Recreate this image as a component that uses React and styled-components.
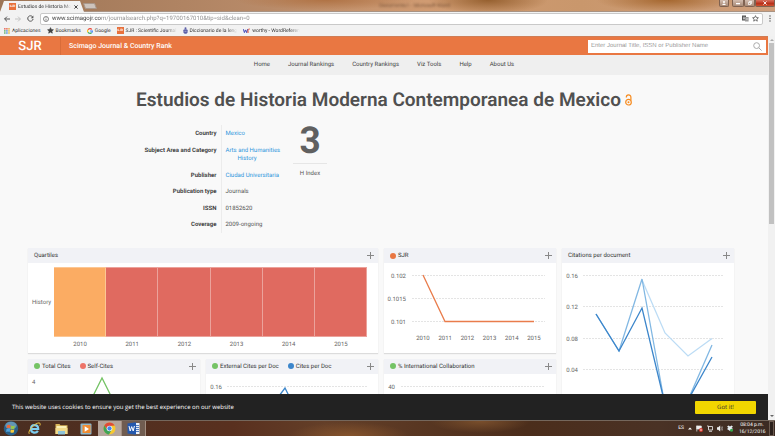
import React from "react";
import styled, { createGlobalStyle } from "styled-components";

const GlobalStyle = createGlobalStyle`
  *, *::before, *::after { box-sizing: border-box; }
  body { margin: 0; overflow: hidden; font-family: Roboto, sans-serif; font-size: 6px; color: #555; text-rendering: geometricPrecision; }
  button, input { font: inherit; text-rendering: inherit; border: 0; padding: 0; margin: 0; background: none; color: inherit; }
  a { color: inherit; text-decoration: none; }
  svg { display: block; flex: none; }
`;

const Desktop = styled.div`
  height: 100vh;
  display: flex;
  flex-direction: column;
`;

/* ---------- Browser frame ---------- */

const TitleBar = styled.header`
  flex: none;
  height: 12px;
  display: flex;
  align-items: flex-end;
  background:
    radial-gradient(ellipse 60px 14px at 63% 0, #96602f 0, transparent 100%),
    radial-gradient(ellipse 70px 12px at 86% 0, #a5672f 0, transparent 100%),
    radial-gradient(ellipse 90px 10px at 42% 0, #b07345 0, transparent 100%),
    linear-gradient(90deg, #9d7556, #b98b69 35%, #d09b72 55%, #c9976c 75%, #cf9f7c);
  box-shadow: inset 0 -1px #a99383;
`;

const Tab = styled.div`
  width: 84px;
  height: 11px;
  padding: 0 5px 0 9px;
  display: flex;
  align-items: center;
  gap: 2px;
  background: #f2f2f2;
  clip-path: polygon(4px 0, 80px 0, 100% 100%, 0 100%);
  font: 5px/10px Roboto, sans-serif;
  color: #333;
  white-space: nowrap;
`;

const TabTitle = styled.span`
  flex: 1;
  mask-image: linear-gradient(90deg, #000 85%, transparent);
`;

const TabClose = styled.button`
  width: 7px;
  height: 7px;
  display: grid;
  place-items: center;
`;

const NewTab = styled.button`
  width: 12px;
  height: 6px;
  align-self: center;
  background: #cdc3bc;
  transform: skewX(20deg);
  border-radius: 1px;
  border: 1px solid #a9978a;
`;

const TitleGhost = styled.span`
  flex: 1;
  padding-left: 14px;
  text-align: center;
  align-self: center;
  font: 5px/8px "Open Sans", sans-serif;
  color: #6b4a33;
  filter: blur(1px);
`;

const WindowControls = styled.div`
  display: flex;
  align-self: flex-start;
`;

const WindowButton = styled.button`
  width: ${(p) => p.$width}px;
  height: 7px;
  margin-right: ${(p) => (p.$apart ? 3 : 0)}px;
  display: grid;
  place-items: center;
  color: #fff;
  border: 1px solid #7f6251;
  border-top: 0;
  border-radius: 0 0 2px 2px;
  background: ${(p) => (p.$danger ? "linear-gradient(#d9705e, #b8301a 60%, #d0522f)" : "linear-gradient(#d3bcae, #a98b78)")};
`;

const Toolbar = styled.div`
  flex: none;
  height: 13px;
  padding: 0 4px;
  display: flex;
  align-items: center;
  gap: 6px;
  background: #f2f2f2;
`;

const ToolButton = styled.button`
  width: 5px;
  height: 8px;
  display: grid;
  place-items: center;
  color: ${(p) => (p.$dim ? "#c4c4c4" : "#555")};
`;

const ReloadButton = styled(ToolButton)`
  width: 8px;
`;

const AddressBar = styled.div`
  flex: 1;
  height: 12px;
  padding: 0 3px 0 2px;
  display: flex;
  align-items: center;
  gap: 3px;
  color: #555;
  background: #fff;
  border: 1px solid #c9c9c9;
  border-radius: 2px;
`;

const AddressInput = styled.input`
  flex: 1;
  min-width: 0;
  height: 9px;
  outline: 0;
  font: 6px/9px Roboto, sans-serif;
  color: transparent;
  background: linear-gradient(90deg, #333 49px, #888 49px);
  background-clip: text;
  -webkit-background-clip: text;
`;

const Bookmarks = styled.nav`
  flex: none;
  height: 11px;
  padding: 0 4px;
  display: flex;
  align-items: center;
  gap: 6px;
  background: #f2f2f2;
  font: 5px/10px Roboto, sans-serif;
  color: #333;
`;

const Bookmark = styled.a`
  display: flex;
  align-items: center;
  gap: 2px;
  white-space: nowrap;
  mask-image: ${(p) => (p.$fade ? "linear-gradient(90deg, #000 82%, transparent)" : "none")};
`;

const SjrTile = styled.span`
  flex: none;
  width: 7px;
  height: 7px;
  font: 700 3px/7px Roboto, sans-serif;
  text-align: center;
  color: #fff;
  background: #e8713c;
`;

/* ---------- Site ---------- */

const Viewport = styled.div`
  flex: 1;
  min-height: 0;
  display: flex;
  position: relative;
`;

const Page = styled.div`
  flex: 1;
  min-width: 0;
  overflow: hidden;
  background: #f9f9f9;
`;

const ScrollTrack = styled.div`
  flex: none;
  width: 7px;
  display: flex;
  flex-direction: column;
  align-items: center;
  padding: 3px 0;
  gap: 2px;
  background: #f1f1f1;
`;

const ScrollThumb = styled.div`
  width: 5px;
  height: 48%;
  background: #c1c1c1;
`;

const ScrollArrow = styled.div`
  border: 2px solid transparent;
  border-top: ${(p) => (p.$down ? "2px solid #666" : "0")};
  border-bottom: ${(p) => (p.$down ? "0" : "2px solid #aaa")};
  margin-top: ${(p) => (p.$down ? "auto" : "0")};
`;

const SiteHeader = styled.div`
  height: 19px;
  padding-right: 2px;
  display: flex;
  align-items: center;
  color: #fff;
  background: #e97742;
  border-top: 1px solid #cf7d55;
`;

const Logo = styled.a`
  width: 61px;
  height: 18px;
  font-size: 13px;
  font-weight: 500;
  line-height: 19px;
  text-align: center;
  border-right: 1px solid #d96c39;
`;

const SiteName = styled.span`
  flex: 1;
  padding-left: 8px;
  font-size: 7px;
  font-weight: 500;
  line-height: 18px;
`;

const SearchBox = styled.form`
  width: 178px;
  height: 13px;
  padding: 0 4px 0 3px;
  display: flex;
  align-items: center;
  color: #aaa;
  background: #fff;
`;

const SearchInput = styled.input`
  flex: 1;
  min-width: 0;
  height: 11px;
  outline: 0;
  font: 6px/11px "Liberation Sans", sans-serif;
  &::placeholder { color: #999; opacity: 1; }
`;

const IconButton = styled.button`
  display: grid;
  place-items: center;
  color: #8c8c8c;
`;

const SiteNav = styled.nav`
  height: 20px;
  display: flex;
  align-items: center;
  justify-content: center;
  gap: 18px;
  line-height: 20px;
  color: #444;
  background: #efefef;
`;

const Title = styled.h1`
  margin: 12px 0 0;
  display: flex;
  justify-content: center;
  align-items: center;
  gap: 4px;
  font-size: 19px;
  font-weight: 600;
  line-height: 26px;
  color: #505050;
  white-space: nowrap;
`;

const Summary = styled.section`
  padding: 12px 0 0 28px;
  display: flex;
  gap: 9px;
`;

const Facts = styled.table`
  width: 256px;
  height: 108px;
  table-layout: fixed;
  border-collapse: collapse;
  line-height: 8px;
`;

const FactName = styled.th`
  width: 193px;
  padding: 5px 4px 3px 0;
  text-align: right;
  vertical-align: top;
  font-weight: 700;
  color: #444;
  border-right: 1px solid #ececec;
`;

const FactValue = styled.td`
  padding: 5px 0 3px 4px;
  vertical-align: top;
  color: ${(p) => (p.$link ? "#2f96dc" : "#555")};
  white-space: nowrap;
`;

const SubItem = styled.a`
  display: block;
  padding-left: 12px;
`;

const HIndex = styled.div`
  width: 34px;
  text-align: center;
  color: #555;
`;

const HValue = styled.div`
  height: 39px;
  font-size: 37px;
  font-weight: 700;
  line-height: 33px;
  color: #606060;
  border-bottom: 1px solid #e6e6e6;
`;

const HLabel = styled.div`
  line-height: 20px;
`;

const Panels = styled.section`
  margin: 15px 34px 0 28px;
  display: grid;
  grid-template-columns: repeat(4, 1fr);
  gap: 6px;
`;

const Panel = styled.article`
  grid-column: span ${(p) => p.$cols || 1};
  grid-row: span ${(p) => p.$rows || 1};
  background: #fff;
  box-shadow: 0 1px 1px #dcdcdc;
`;

const PanelHeader = styled.header`
  height: 15px;
  padding: 0 4px 0 6px;
  display: flex;
  align-items: center;
  gap: 9px;
  background: #f1f2f6;
  color: #333;
`;

const PanelTitle = styled.h2`
  margin: 0;
  display: flex;
  align-items: center;
  gap: 2px;
  font-size: 6px;
  font-weight: 400;
  line-height: 15px;
  white-space: nowrap;
`;

const Dot = styled.span`
  width: 6px;
  height: 6px;
  border-radius: 50%;
  background: ${(p) => p.$color};
`;

const ExpandButton = styled(IconButton)`
  margin-left: auto;
`;

const Quartiles = styled.div`
  height: 89px;
  padding: 4px 11px 0 4px;
  display: grid;
  grid-template-columns: 22px repeat(6, 1fr);
  grid-template-rows: 70px 15px;
  align-items: center;
  justify-items: center;
  color: #666;
`;

const QuartileLabel = styled.span`
  justify-self: start;
`;

const QuartileCell = styled.div`
  width: 100%;
  height: 100%;
  background: ${(p) => (p.$quartile === 2 ? "#fbac63" : "#e06a60")};
  border: 1px solid ${(p) => (p.$quartile === 2 ? "#fcc794" : "#eba29b")};
  border-left-width: 0;
`;

const Chart = styled.svg`
  width: 100%;
  height: auto;
  font-size: 6px;
  fill: none;
  text { fill: #666; }
`;

const CookieBar = styled.div`
  position: absolute;
  left: 0;
  right: 7px;
  bottom: 0;
  height: 26px;
  padding: 0 12px;
  display: flex;
  align-items: center;
  justify-content: space-between;
  font: 400 6px/12px "Open Sans", sans-serif;
  color: #fff;
  background: #222;
`;

const AcceptButton = styled.button`
  width: 61px;
  height: 13px;
  font-size: 6px;
  color: #333;
  background: #f1d600;
  border-radius: 1px;
`;

/* ---------- Taskbar ---------- */

const Taskbar = styled.footer`
  flex: none;
  height: 16px;
  padding: 0 1px 0 2px;
  display: flex;
  align-items: center;
  color: #fff;
  background:
    radial-gradient(ellipse 50px 12px at 62% 0, #7a4f2c, transparent),
    radial-gradient(ellipse 60px 14px at 45% 100%, #85532c, transparent),
    linear-gradient(90deg, #4a2e21, #59301f 30%, #643f28 42%, #4b2d1b 68%, #4a3225 85%, #3b2a22);
  border-top: 1px solid #75675c;
`;

const TaskButton = styled.button`
  width: ${(p) => p.$width || 24}px;
  height: 15px;
  display: grid;
  place-items: center;
  background: ${(p) => (p.$active ? "#b5a59b" : p.$open ? "#705c50" : "none")};
  border-right: 1px solid ${(p) => (p.$open ? "#a18d80" : "transparent")};
`;

const Tray = styled.div`
  margin-left: auto;
  display: flex;
  align-items: center;
  gap: 4px;
  font: 5px/7px Roboto, sans-serif;
`;

const Clock = styled.time`
  margin-left: 2px;
  width: 26px;
  text-align: center;
  white-space: nowrap;
`;

const ShowDesktop = styled.button`
  width: 5px;
  height: 15px;
  background: #2c211c;
  border: 1px solid #6d5c51;
`;

/* ---------- Icons ---------- */

const Plus = () => (
  <svg width="7" height="7" viewBox="0 0 7 7" stroke="#888" strokeWidth="1">
    <path d="M3.5 0v7M0 3.5h7" />
  </svg>
);

const Cross = ({ size = 4 }) => (
  <svg width={size} height={size} viewBox="0 0 4 4" stroke="currentColor" strokeWidth="0.9">
    <path d="M.4.4l3.2 3.2M3.6.4L.4 3.6" />
  </svg>
);

const Arrow = ({ flip }) => (
  <svg width="6" height="6" viewBox="0 0 6 6" fill="none" stroke="currentColor" strokeWidth="1">
    <path d={flip ? "M0 3h5.4M3 .6L5.4 3 3 5.4" : "M6 3H.6M3 .6L.6 3 3 5.4"} />
  </svg>
);

const Reload = () => (
  <svg width="7" height="7" viewBox="0 0 7 7" fill="none" stroke="currentColor" strokeWidth="1">
    <path d="M5.7 2A2.7 2.7 0 1 0 6.1 4" />
    <path d="M6.4.4v2.8H3.8z" fill="currentColor" stroke="none" />
  </svg>
);

const Info = () => (
  <svg width="6" height="6" viewBox="0 0 6 6" fill="none" stroke="currentColor" strokeWidth=".7">
    <circle cx="3" cy="3" r="2.5" />
    <path d="M3 2.6v2M3 1.3v.7" />
  </svg>
);

const Translate = () => (
  <svg width="7" height="7" viewBox="0 0 7 7">
    <rect x="0" y=".5" width="4" height="5" fill="#555" />
    <rect x="3" y="2" width="3.6" height="4.5" fill="#999" />
    <path d="M1 3.2h2M2 1.6v3M4 4h2" stroke="#fff" strokeWidth=".6" />
  </svg>
);

const Star = ({ filled }) => (
  <svg width="7" height="7" viewBox="0 0 14 14" fill={filled ? "#444" : "none"} stroke="#444" strokeWidth="1.4">
    <path d="M7 1.3l1.7 3.8 4.1.4-3.1 2.7.9 4.1L7 10.2l-3.6 2.1.9-4.1L1.2 5.5l4.1-.4z" />
  </svg>
);

const Dots = () => (
  <svg width="2" height="7" viewBox="0 0 2 7" fill="#666">
    <circle cx="1" cy="1" r=".8" />
    <circle cx="1" cy="3.5" r=".8" />
    <circle cx="1" cy="6" r=".8" />
  </svg>
);

const Apps = () => (
  <svg width="6" height="6" viewBox="0 0 6 6">
    {["#e8776a", "#e8776a", "#eab55a", "#74b77b", "#6a9be0", "#e8c04d", "#74b77b", "#6a9be0", "#e8c04d"].map((c, i) => (
      <rect key={i} x={(i % 3) * 2.1} y={Math.floor(i / 3) * 2.1} width="1.6" height="1.6" fill={c} />
    ))}
  </svg>
);

const Google = () => (
  <svg width="6" height="6" viewBox="0 0 12 12" fill="none" strokeWidth="2.2">
    <path d="M9.8 3A4.8 4.8 0 0 0 2 3.5" stroke="#ea4335" />
    <path d="M2 3.5a4.8 4.8 0 0 0 0 5" stroke="#fbbc05" />
    <path d="M2 8.5a4.8 4.8 0 0 0 7.2 1" stroke="#34a853" />
    <path d="M9.2 9.5A4.6 4.6 0 0 0 10.8 6H6" stroke="#4285f4" />
  </svg>
);

const Crest = () => (
  <svg width="5" height="7" viewBox="0 0 5 7" fill="#5b5fa8">
    <circle cx="2.5" cy="1.2" r="1" />
    <path d="M.4 3.2C.4 2 4.6 2 4.6 3.2v2C4.6 6 3.6 6.8 2.5 6.8S.4 6 .4 5.2z" />
    <path d="M1.5 4.3h2" stroke="#c3c4e2" strokeWidth=".7" />
  </svg>
);

const WordReference = () => (
  <svg width="7" height="6" viewBox="0 0 7 6" fill="none">
    <path d="M.4 1.2l1 3.4 1.1-2.7 1.1 2.7 1-3.4" stroke="#4048b8" strokeWidth="1" />
    <path d="M5 5V2.2C5.3 1 6.2.8 6.8 1.2" stroke="#d8452f" strokeWidth="1" />
  </svg>
);

const Search = () => (
  <svg width="9" height="9" viewBox="0 0 9 9" fill="none" stroke="#aaa" strokeWidth="1">
    <circle cx="3.6" cy="3.6" r="2.9" />
    <path d="M5.7 5.7l2.9 2.9" />
  </svg>
);

const OpenAccess = () => (
  <svg width="7" height="12" viewBox="0 0 7 12" fill="none" stroke="#f68b1f" strokeWidth="1.2">
    <circle cx="3.5" cy="8.2" r="2.8" />
    <path d="M1.3 3.5C1.3 0 5.9 0 5.9 3.3v3.2" />
    <circle cx="3.5" cy="8.2" r="1" fill="#f68b1f" stroke="none" />
  </svg>
);

const StartOrb = () => (
  <svg width="16" height="15" viewBox="0 0 16 15">
    <circle cx="8" cy="7.5" r="7.2" fill="#2b5f86" />
    <ellipse cx="8" cy="4.5" rx="5.7" ry="3.8" fill="#7fb0cc" opacity=".65" />
    <path d="M4 4.3q1.8-1 3.6 0l-.4 3q-1.7-1-3.6 0z" fill="#e8683c" />
    <path d="M8.2 4.5q1.8 1 3.6 0l-.4 3q-1.7 1-3.6 0z" fill="#9bc648" />
    <path d="M3.5 8q1.8-1 3.6 0l-.4 3q-1.7-1-3.6 0z" fill="#4fa3dc" />
    <path d="M7.7 8.2q1.8 1 3.6 0l-.4 3q-1.7 1-3.6 0z" fill="#f5ca3c" />
  </svg>
);

const Explorer = () => (
  <svg width="13" height="13" viewBox="0 0 13 13" fill="none">
    <path d="M3 7h7.2C10.2 1.9 3 1.9 3 7c0 4.3 5.2 4.6 6.9 1.9" stroke="#7ccdf0" strokeWidth="2.2" />
    <path d="M1.2 11.8C-.6 9 6.5 1 11 .9c1.6.1 1.4 1.6.8 2.7" stroke="#e9c544" strokeWidth="1" />
  </svg>
);

const Folder = () => (
  <svg width="13" height="12" viewBox="0 0 13 12">
    <path d="M.5 1h4l1 1.2h7V11H.5z" fill="#d9b75b" />
    <path d="M1.5 3h10v6h-10z" fill="#f9efb8" />
    <path d="M.5 5h12v6H.5z" fill="#f0d98a" />
    <path d="M3 8h7v3.5H3z" fill="#8ec3d8" />
  </svg>
);

const MediaPlayer = () => (
  <svg width="12" height="12" viewBox="0 0 12 12">
    <rect x=".5" y=".5" width="11" height="11" rx="1" fill="#8fb6c8" />
    <rect x="2.5" y="2" width="8" height="8" fill="#ef8b31" />
    <path d="M4.7 3.3v5.4L9 6z" fill="#fff" />
  </svg>
);

const Chrome = () => (
  <svg width="13" height="13" viewBox="0 0 26 26">
    <circle cx="13" cy="13" r="12" fill="#f7c92f" />
    <path d="M2.6 7A12 12 0 0 1 23.4 7L13 8 8.5 15.5z" fill="#dd4b3a" />
    <path d="M2.6 7A12 12 0 0 0 12 25l5.5-9.5L8 15z" fill="#3fa357" />
    <circle cx="13" cy="13" r="5.6" fill="#fff" />
    <circle cx="13" cy="13" r="4.3" fill="#4686e8" />
  </svg>
);

const WordApp = () => (
  <svg width="13" height="13" viewBox="0 0 13 13">
    <rect x="4" y="1" width="8.5" height="11" fill="#e9f0fa" />
    <path d="M9 3.5h3M9 5.5h3M9 7.5h3M9 9.5h3" stroke="#2c5fb3" strokeWidth=".8" />
    <path d="M.5 1.5L9 .3v12.4L.5 11.5z" fill="#2458ad" />
    <path d="M2 4l1.2 5L4.7 4.6 6.2 9 7.4 4" stroke="#fff" strokeWidth="1" fill="none" />
  </svg>
);

const TrayFlag = () => (
  <svg width="7" height="7" viewBox="0 0 7 7">
    <path d="M.8.5V6.5M.8 1h4.5v3H.8z" fill="#eee" stroke="#eee" strokeWidth=".7" />
    <circle cx="5" cy="5" r="2" fill="#d93a2f" />
    <path d="M4.2 4.2l1.6 1.6M5.8 4.2L4.2 5.8" stroke="#fff" strokeWidth=".5" />
  </svg>
);

const TrayNetwork = () => (
  <svg width="6" height="7" viewBox="0 0 6 7" fill="none" stroke="#ddd" strokeWidth=".9">
    <path d="M1.5 1.5h4V5h-4zM0 1h1.5v2.5M2 6.3h3" />
  </svg>
);

const TrayVolume = () => (
  <svg width="6" height="7" viewBox="0 0 6 7" fill="#eee">
    <path d="M0 2.3h1.2L3.2.6v5.8L1.2 4.7H0z" />
    <path d="M4 2q1 1.5 0 3M5 1.2q1.5 2.3 0 4.6" fill="none" stroke="#bbb" strokeWidth=".6" />
  </svg>
);

const TrayDropbox = () => (
  <svg width="6" height="7" viewBox="0 0 6 7">
    <path d="M1.5.5L3 1.5 4.5.5 6 1.7 4.6 2.8 6 3.9 3 6 0 3.9l1.4-1.1L0 1.7z" fill="#e6edf2" />
    <circle cx="4.5" cy="5.2" r="1.5" fill="#35a84a" />
  </svg>
);

/* ---------- Charts ---------- */

const YAxis = ({ ticks, x, from, to }) =>
  ticks.map(([label, y]) => (
    <g key={label}>
      <path d={`M${from} ${y}.5H${to}`} stroke="#e4e4e4" strokeDasharray="2 1" />
      <text x={x} y={y + 3} textAnchor="end">{label}</text>
    </g>
  ));

const SjrChart = () => (
  <Chart viewBox="0 0 172 89" role="img" aria-label="SJR by year">
    <YAxis ticks={[["0.102", 12], ["0.1015", 35], ["0.101", 58]]} x={22} from={28} to={161} />
    <path d="M39 12L61 58.5H150" stroke="#e97c4b" strokeWidth="1.3" />
    {[2010, 2011, 2012, 2013, 2014, 2015].map((year, i) => (
      <text key={year} x={39 + i * 22.2} y="77" textAnchor="middle">{year}</text>
    ))}
  </Chart>
);

const CitationsChart = () => (
  <Chart viewBox="0 0 172 200" role="img" aria-label="Citations per document by year">
    <YAxis ticks={[["0.16", 12], ["0.12", 43], ["0.08", 75], ["0.04", 106]]} x={16} from={21} to={161} />
    <g strokeWidth="1.3">
      <path d="M80 17L103 70 126 93 150 75.5" stroke="#bcdcf5" />
      <path d="M34 51L57 88 80 16 102 137 126 137 150 82" stroke="#82b8e3" />
      <path d="M34 51L57 88 80 45 102 137 126 137 150 94" stroke="#3c86cb" />
    </g>
  </Chart>
);

const TotalCitesChart = () => (
  <Chart viewBox="0 0 172 89" role="img" aria-label="Total cites and self-cites by year">
    <text x="4" y="10">4</text>
    <path d="M60 32L74 4 88 32" stroke="#74c365" strokeWidth="1.3" />
  </Chart>
);

const CitesPerDocChart = () => (
  <Chart viewBox="0 0 172 89" role="img" aria-label="External cites and cites per document by year">
    <YAxis ticks={[["0.16", 12]]} x={16} from={21} to={161} />
    <path d="M67 30L79 14 89 34" stroke="#3c86cb" strokeWidth="1.3" />
  </Chart>
);

const CollaborationChart = () => (
  <Chart viewBox="0 0 172 89" role="img" aria-label="International collaboration by year">
    <YAxis ticks={[["40", 12]]} x={11} from={17} to={161} />
  </Chart>
);

const PanelCard = ({ series, cols, rows, children }) => (
  <Panel $cols={cols} $rows={rows}>
    <PanelHeader>
      {series.map(([name, color]) => (
        <PanelTitle key={name}>
          {color && <Dot $color={color} />}
          {name}
        </PanelTitle>
      ))}
      <ExpandButton type="button" aria-label={`Expand ${series[0][0]}`}><Plus /></ExpandButton>
    </PanelHeader>
    {children}
  </Panel>
);

const quartiles = [[2010, 2], [2011, 4], [2012, 4], [2013, 4], [2014, 4], [2015, 4]];

export default function App() {
  return (
    <Desktop>
      <GlobalStyle />
      <TitleBar>
        <Tab>
          <SjrTile>SJR</SjrTile>
          <TabTitle>Estudios de Historia Mo</TabTitle>
          <TabClose type="button" aria-label="Close tab"><Cross /></TabClose>
        </Tab>
        <NewTab type="button" aria-label="New tab" />
        <TitleGhost>Documento1 - Microsoft Word</TitleGhost>
        <WindowControls>
          <WindowButton type="button" $width={10} $apart aria-label="Profile">
            <svg width="4" height="4" viewBox="0 0 4 4" fill="#fff"><circle cx="2" cy="1" r="1" /><path d="M0 4q2-3 4 0z" /></svg>
          </WindowButton>
          <WindowButton type="button" $width={12} aria-label="Minimize">
            <svg width="4" height="4" viewBox="0 0 4 4" fill="#fff"><path d="M0 2h4v1.3H0z" /></svg>
          </WindowButton>
          <WindowButton type="button" $width={11} aria-label="Restore">
            <svg width="4" height="4" viewBox="0 0 4 4" fill="none" stroke="#fff" strokeWidth=".8"><path d="M.4 1.4h2.2v2.2H.4zM1.4 1.2V.4h2.2v2.2h-.8" /></svg>
          </WindowButton>
          <WindowButton type="button" $width={20} $danger aria-label="Close"><Cross /></WindowButton>
        </WindowControls>
      </TitleBar>

      <Toolbar>
        <ToolButton type="button" aria-label="Back"><Arrow /></ToolButton>
        <ToolButton type="button" $dim aria-label="Forward"><Arrow flip /></ToolButton>
        <ReloadButton type="button" aria-label="Reload"><Reload /></ReloadButton>
        <AddressBar>
          <Info />
          <AddressInput
            aria-label="Address"
            defaultValue="www.scimagojr.com/journalsearch.php?q=19700167010&tip=sid&clean=0"
          />
          <IconButton type="button" aria-label="Translate"><Translate /></IconButton>
          <IconButton type="button" aria-label="Bookmark this page"><Star /></IconButton>
        </AddressBar>
        <IconButton type="button" aria-label="Menu"><Dots /></IconButton>
      </Toolbar>

      <Bookmarks aria-label="Bookmarks">
        <Bookmark href="#apps"><Apps />Aplicaciones</Bookmark>
        <Bookmark href="#bookmarks"><Star filled />Bookmarks</Bookmark>
        <Bookmark href="#google"><Google />Google</Bookmark>
        <Bookmark href="#sjr" $fade><SjrTile>SJR</SjrTile>SJR : Scientific Journal</Bookmark>
        <Bookmark href="#rae" $fade><Crest />Diccionario de la leng</Bookmark>
        <Bookmark href="#wr" $fade><WordReference />worthy - WordReferen</Bookmark>
      </Bookmarks>

      <Viewport>
        <Page>
          <SiteHeader>
            <Logo href="#home">SJR</Logo>
            <SiteName>Scimago Journal &amp; Country Rank</SiteName>
            <SearchBox role="search">
              <SearchInput aria-label="Search journals" placeholder="Enter Journal Title, ISSN or Publisher Name" />
              <IconButton type="button" aria-label="Search"><Search /></IconButton>
            </SearchBox>
          </SiteHeader>
          <SiteNav>
            <a href="#home">Home</a>
            <a href="#journals">Journal Rankings</a>
            <a href="#countries">Country Rankings</a>
            <a href="#viz">Viz Tools</a>
            <a href="#help">Help</a>
            <a href="#about">About Us</a>
          </SiteNav>

          <Title>
            Estudios de Historia Moderna Contemporanea de Mexico
            <OpenAccess />
          </Title>

          <Summary>
            <Facts>
              <tbody>
                <tr><FactName scope="row">Country</FactName><FactValue $link><a href="#mexico">Mexico</a></FactValue></tr>
                <tr>
                  <FactName scope="row">Subject Area and Category</FactName>
                  <FactValue $link><a href="#arts">Arts and Humanities</a><SubItem href="#history">History</SubItem></FactValue>
                </tr>
                <tr><FactName scope="row">Publisher</FactName><FactValue $link><a href="#publisher">Ciudad Universitaria</a></FactValue></tr>
                <tr><FactName scope="row">Publication type</FactName><FactValue>Journals</FactValue></tr>
                <tr><FactName scope="row">ISSN</FactName><FactValue>01852620</FactValue></tr>
                <tr><FactName scope="row">Coverage</FactName><FactValue>2009-ongoing</FactValue></tr>
              </tbody>
            </Facts>
            <HIndex>
              <HValue>3</HValue>
              <HLabel>H Index</HLabel>
            </HIndex>
          </Summary>

          <Panels>
            <PanelCard cols={2} series={[["Quartiles"]]}>
              <Quartiles>
                <QuartileLabel>History</QuartileLabel>
                {quartiles.map(([year, q]) => <QuartileCell key={year} $quartile={q} />)}
                <span />
                {quartiles.map(([year]) => <span key={year}>{year}</span>)}
              </Quartiles>
            </PanelCard>
            <PanelCard series={[["SJR", "#e97742"]]}><SjrChart /></PanelCard>
            <PanelCard rows={2} series={[["Citations per document"]]}><CitationsChart /></PanelCard>
            <PanelCard series={[["Total Cites", "#74c365"], ["Self-Cites", "#ee7468"]]}><TotalCitesChart /></PanelCard>
            <PanelCard series={[["External Cites per Doc", "#74c365"], ["Cites per Doc", "#3c86cb"]]}><CitesPerDocChart /></PanelCard>
            <PanelCard series={[["% International Collaboration", "#74c365"]]}><CollaborationChart /></PanelCard>
          </Panels>
        </Page>
        <ScrollTrack>
          <ScrollArrow />
          <ScrollThumb />
          <ScrollArrow $down />
        </ScrollTrack>
        <CookieBar>
          <span>This website uses cookies to ensure you get the best experience on our website</span>
          <AcceptButton type="button">Got it!</AcceptButton>
        </CookieBar>
      </Viewport>

      <Taskbar>
        <TaskButton type="button" $width={18} aria-label="Start"><StartOrb /></TaskButton>
        <TaskButton type="button" $width={30} aria-label="Internet Explorer"><Explorer /></TaskButton>
        <TaskButton type="button" aria-label="Files"><Folder /></TaskButton>
        <TaskButton type="button" aria-label="Media player"><MediaPlayer /></TaskButton>
        <TaskButton type="button" $open $active aria-label="Chrome"><Chrome /></TaskButton>
        <TaskButton type="button" $open aria-label="Word"><WordApp /></TaskButton>
        <Tray>
          <span>ES</span>
          <svg width="4" height="3" viewBox="0 0 4 3" fill="#fff"><path d="M0 2.5L2 .5l2 2z" /></svg>
          <TrayFlag />
          <TrayNetwork />
          <TrayVolume />
          <TrayDropbox />
          <Clock>08:04 p.m.<br />16/12/2016</Clock>
          <ShowDesktop type="button" aria-label="Show desktop" />
        </Tray>
      </Taskbar>
    </Desktop>
  );
}
